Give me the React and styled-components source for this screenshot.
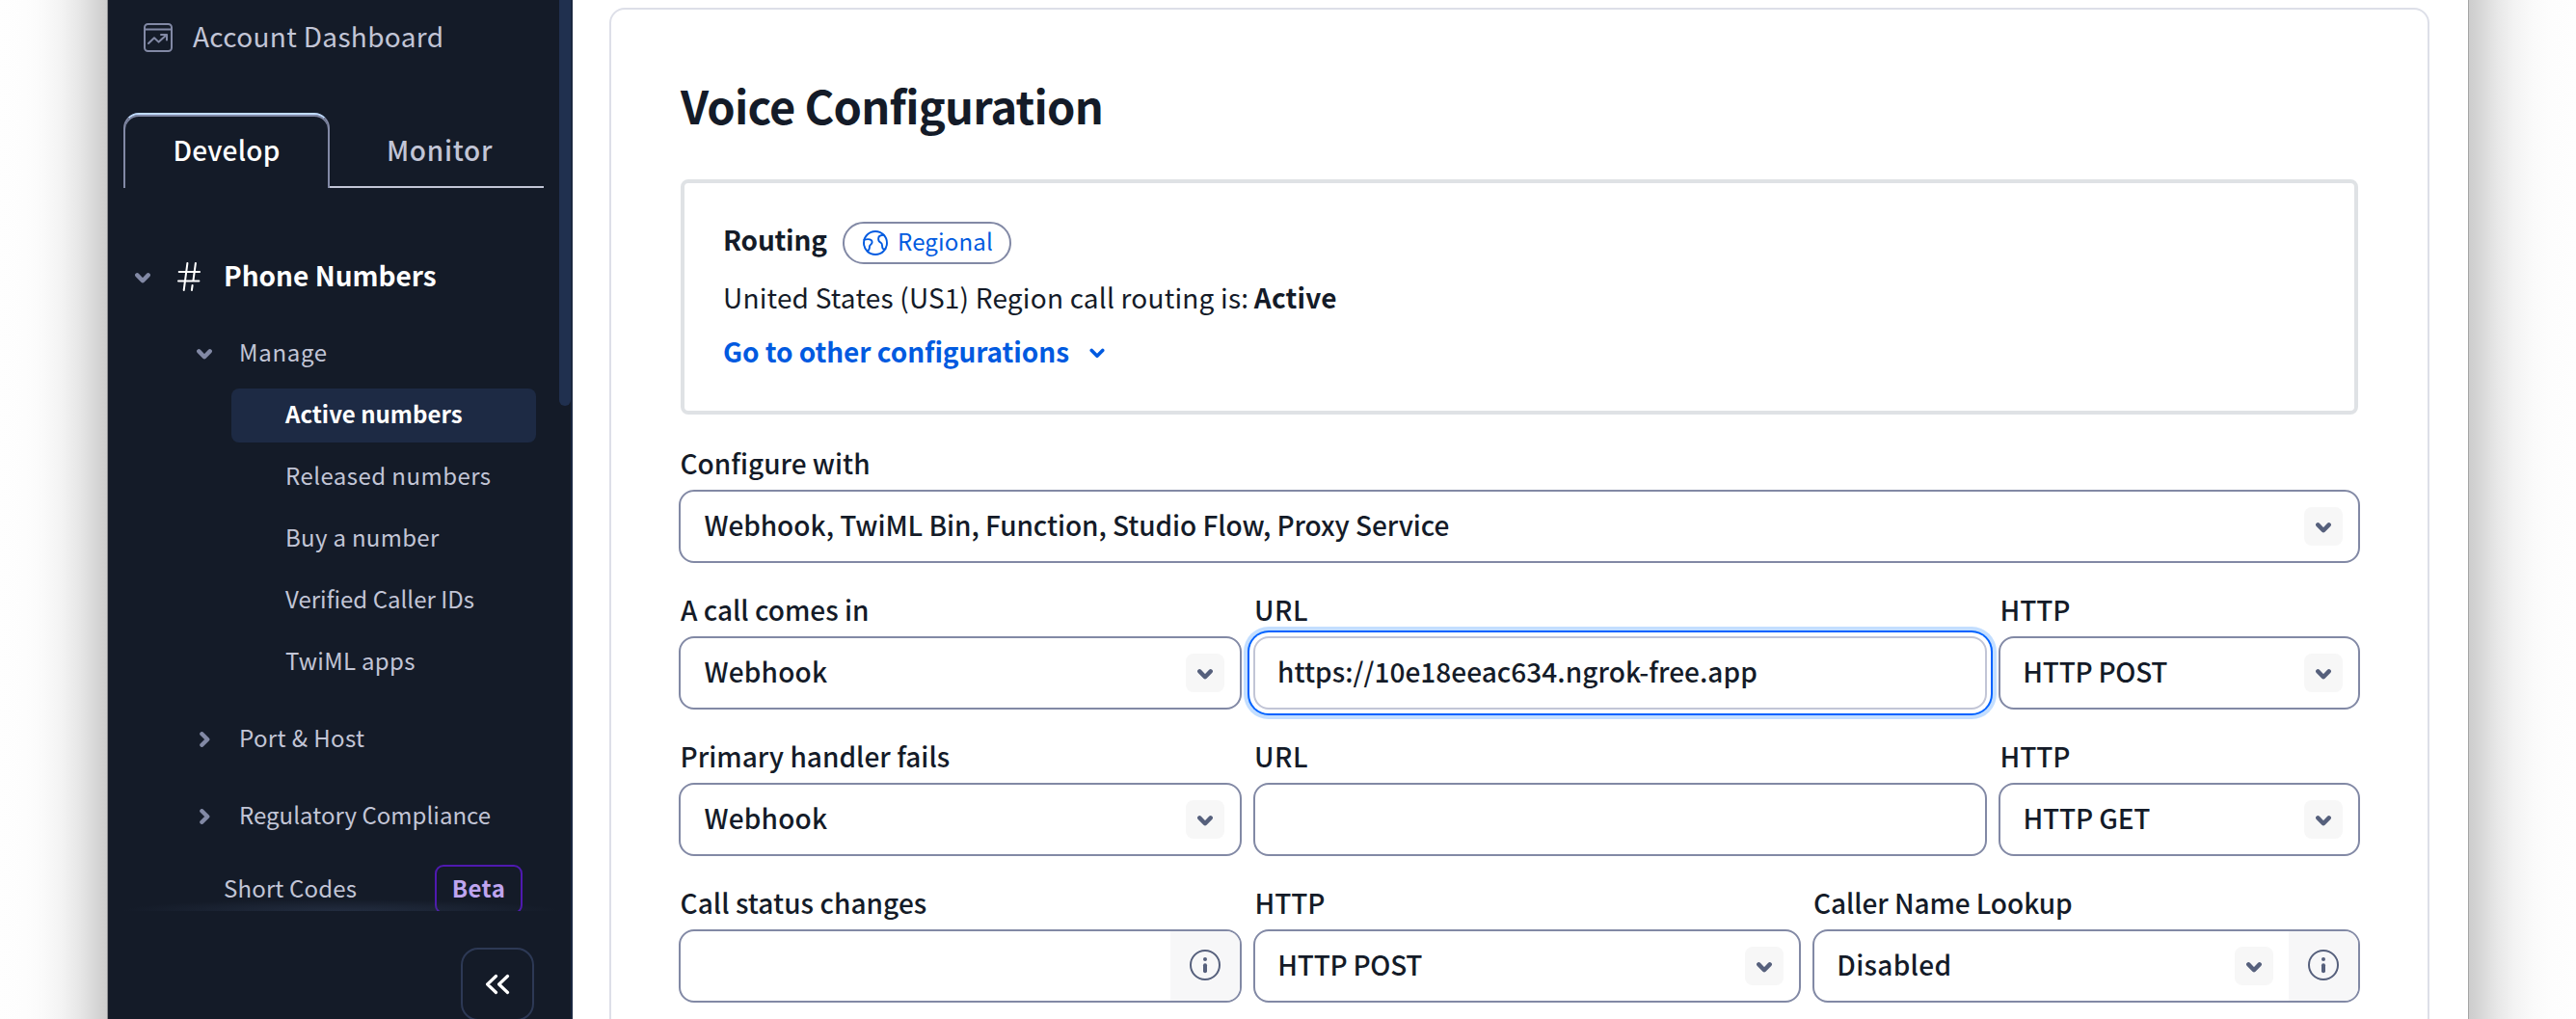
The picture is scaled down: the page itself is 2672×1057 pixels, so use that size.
import React from "react";
import styled, { createGlobalStyle } from "styled-components";

const ink = "#141b28";
const sidebarBg = "#141b28";
const navText = "#c2c5d6";
const muted = "#8289a5";
const iconInk = "#56607c";
const link = "#005ae0";

const GlobalStyle = createGlobalStyle`
  * { box-sizing: border-box; }
  body {
    margin: 0;
    background: #fff;
    color: ${ink};
    font-family: "Noto Sans CJK JP", "Noto Sans", sans-serif;
    font-size: 28px;
    line-height: 40px;
    overflow: hidden;
  }
`;

const Desktop = styled.div`
  display: flex;
  width: 2672px;
  height: 1057px;
  overflow: hidden;
`;

const WindowShadow = styled.div`
  width: 112px;
  flex: none;
  background: linear-gradient(
    to ${(p) => p.$side},
    #cdcdcd 0px,
    #d3d3d3 8px,
    #dddddd 18px,
    #e8e8e8 30px,
    #f3f3f3 47px,
    #fafafa 66px,
    #fdfdfd 84px,
    #fefefe 112px
  );
  ${(p) => (p.$side === "left" ? "border-right: 1px solid #8e8f91;" : "border-left: 1px solid #a3a3a3;")}
`;

const Window = styled.div`
  display: flex;
  width: 2448px;
  flex: none;
  background: #fff;
`;

const Sidebar = styled.aside`
  display: flex;
  flex-direction: column;
  width: 482px;
  flex: none;
  background: ${sidebarBg};
  border-right: 2px solid #1a2740;
`;

const NavScroll = styled.div`
  position: relative;
  display: flex;
  height: 945px;
  flex: none;
  overflow: hidden;
`;

const NavContent = styled.nav`
  display: flex;
  flex-direction: column;
  width: 468px;
  flex: none;
  color: ${navText};
  & > * { flex-shrink: 0; }
`;

const ScrollThumb = styled.div`
  width: 12px;
  height: 421px;
  background: #20304f;
  border-radius: 0 0 6px 6px;
`;

const BottomGlow = styled.div`
  position: absolute;
  left: 14px;
  right: 10px;
  bottom: 0;
  height: 12px;
  background: radial-gradient(ellipse 50% 100% at 50% 100%, rgba(62, 78, 108, 0.34), rgba(62, 78, 108, 0));
`;

const Text = styled.span`
  margin-left: ${(p) => p.$indent || 0}px;
  letter-spacing: ${(p) => p.$ls || 0}px;
`;

const DashboardLink = styled.a`
  display: flex;
  align-items: center;
  height: 50px;
  margin-top: 12px;
  padding-left: 37px;
  gap: 21px;
  svg { margin-top: 4px; }
`;

const Tabs = styled.div`
  display: flex;
  height: 78px;
  margin: 55px 16px 0;
`;

const Tab = styled.button`
  display: flex;
  align-items: center;
  justify-content: center;
  width: ${(p) => (p.$active ? 214 : 222)}px;
  padding: 0 0 ${(p) => (p.$active ? 4 : 0)}px ${(p) => (p.$active ? 0 : 6)}px;
  background: none;
  font: inherit;
  font-weight: 500;
  color: ${(p) => (p.$active ? "#fff" : navText)};
  border: 0 solid ${muted};
  border-bottom-color: ${navText};
  border-width: ${(p) => (p.$active ? "2px 2px 0" : "0 0 2px")};
  border-top-color: ${(p) => (p.$active ? "#c1dcff" : "transparent")};
  border-radius: ${(p) => (p.$active ? "16px 16px 0 0" : "0")};
  box-shadow: ${(p) => (p.$active ? `inset 0 2px 0 ${muted}` : "none")};
`;

const Product = styled.div`
  display: flex;
  align-items: center;
  height: 48px;
  margin-top: 65px;
  padding-left: 28px;
  color: #fff;
  font-weight: 700;
  svg:first-child { margin: 8px 28px 0 0; }
  svg + svg { margin: 6px 24px 0 0; }
  ${Text} { margin-top: 2px; }
`;

const Group = styled.div`
  display: flex;
  align-items: center;
  height: 48px;
  margin-top: ${(p) => p.$top}px;
  font-size: 24px;
  padding-left: 92px;
  ${Text} { margin-top: 2px; }
`;

const GroupIcon = styled.span`
  display: flex;
  justify-content: center;
  width: 16px;
  margin: 6px 28px 0 0;
`;

const Pages = styled.div`
  display: flex;
  flex-direction: column;
  gap: 8px;
  margin: 15px 24px 0 128px;
`;

const PageLink = styled.a`
  height: 56px;
  padding: 6px 0 0 56px;
  border-radius: 8px;
  font-size: 24px;
  white-space: nowrap;
  ${(p) => p.$active && "background: #1d2a44; color: #fff; font-weight: 700;"}
`;

const ShortCodes = styled.div`
  display: flex;
  align-items: flex-start;
  justify-content: space-between;
  margin: 29px 38px 0 120px;
  font-size: 24px;
  line-height: 48px;
`;

const BetaBadge = styled.span`
  height: 51px;
  width: 91px;
  border: 2px solid #4f19b0;
  border-radius: 9px;
  color: #bfa5ef;
  font-weight: 700;
  line-height: 44px;
  text-align: center;
`;

const SidebarFooter = styled.div`
  display: flex;
  justify-content: flex-end;
  padding: 38px 38px 0 0;
`;

const CollapseButton = styled.button`
  display: flex;
  align-items: center;
  justify-content: center;
  width: 76px;
  height: 76px;
  flex: none;
  padding: 0;
  background: none;
  border: 2px solid #2d3955;
  border-radius: 18px;
`;

const Main = styled.main`
  flex: 1;
  padding: 8px 40px 0 38px;
`;

const Card = styled.section`
  height: 1100px;
  padding: 69px 70px 0;
  border: 2px solid #dddfe8;
  border-radius: 16px;
`;

const Title = styled.h1`
  margin: 0 0 0 2px;
  font-size: 47px;
  line-height: 60px;
  font-weight: 700;
`;

const RoutingBox = styled.div`
  height: 244px;
  margin: 47px 2px 0;
  padding: 40px 40px 0;
  border: 4px solid #dfe2e5;
  border-radius: 8px;
`;

const RoutingHead = styled.div`
  display: flex;
  align-items: center;
  height: 44px;
`;

const RoutingName = styled.strong`
  width: 124px;
  padding-bottom: 8px;
  letter-spacing: -0.2px;
`;

const Pill = styled.span`
  display: flex;
  align-items: center;
  width: 175px;
  height: 44px;
  padding-left: 18px;
  gap: 9px;
  border: 2px solid ${muted};
  border-radius: 22px;
  color: ${link};
  font-size: 24px;
  ${Text} { padding-bottom: 4px; }
`;

const RoutingStatus = styled.p`
  margin: 14px 0 0;
  strong {
    margin-left: -1px;
    letter-spacing: 0.2px;
  }
`;

const RoutingLink = styled.a`
  display: flex;
  align-items: center;
  margin-top: 16px;
  gap: 21px;
  color: ${link};
  font-weight: 700;
  svg { margin-top: 5px; }
`;

const Form = styled.div`
  display: flex;
  flex-direction: column;
  gap: 28px;
  margin-top: 30px;
`;

const Row = styled.div`
  display: grid;
  grid-template-columns: ${(p) => p.$cols};
  gap: 12px;
`;

const Field = styled.div`
  display: flex;
  flex-direction: column;
  gap: 8px;
  min-width: 0;
`;

const Label = styled.label`
  padding-left: 1px;
  font-weight: 500;
  white-space: nowrap;
`;

const Control = styled.div`
  display: flex;
  align-items: center;
  height: 76px;
  border: 2px solid ${(p) => (p.$focus ? "#c2c5d6" : muted)};
  border-radius: 16px;
  overflow: hidden;
  background: #fff;
  ${(p) => p.$focus && "box-shadow: 0 0 0 4px #fff, 0 0 0 6px #0062ff, 0 0 0 10px #c3deff;"}
`;

const Value = styled.span`
  flex: 1;
  padding: 0 0 4px 23px;
  font-weight: 500;
  white-space: nowrap;
`;

const Toggle = styled.span`
  display: flex;
  align-items: center;
  justify-content: center;
  width: 40px;
  height: 40px;
  margin-right: 16px;
  border-radius: 8px;
  background: #f7f7f7;
  svg { margin-top: 2px; }
`;

const InfoAddon = styled.span`
  display: flex;
  align-items: center;
  justify-content: center;
  width: 72px;
  height: 72px;
  background: #f7f7f8;
  svg { margin-bottom: 2px; }
`;

const Chevron = ({ color = iconInk, width = 4.4 }) => (
  <svg width="16" height="11" viewBox="0 0 16 11" fill="none" stroke={color} strokeWidth={width} strokeLinecap="round" strokeLinejoin="round">
    <path d="M2.3 2.4 8 8.2l5.7-5.8" />
  </svg>
);

const ChevronRight = () => (
  <svg width="11" height="16" viewBox="0 0 11 16" fill="none" stroke={muted} strokeWidth="4.4" strokeLinecap="round" strokeLinejoin="round">
    <path d="M2.4 2.3 8.2 8l-5.8 5.7" />
  </svg>
);

const DashboardIcon = () => (
  <svg width="30" height="30" viewBox="0 0 30 30" fill="none" stroke={muted} strokeWidth="2" strokeLinecap="round" strokeLinejoin="round">
    <rect x="1" y="1" width="28" height="28" rx="3.5" />
    <path d="M1 6.5h28" />
    <path d="M5 21l6-5.8 4.6 4.4 8-7.4" />
    <path d="M18 12h6v5.6" />
  </svg>
);

const HashIcon = () => (
  <svg width="24" height="30" viewBox="0 0 24 30" fill="none" stroke="#fff" strokeWidth="2" strokeLinecap="round">
    <path d="M10.4 1 6.7 29M18.9 1 16.4 19.5M15.6 24l-.7 5M1.7 10h21.4M1 19.6h21.4" />
  </svg>
);

const GlobeIcon = () => (
  <svg width="28" height="28" viewBox="-1 -1 28 28" fill="none" stroke={link} strokeWidth="1.9" strokeLinecap="round" strokeLinejoin="round">
    <circle cx="13" cy="13" r="12" />
    <path d="M1.4 9.6C4 9 7 8.8 8.6 10c1.4 1.2 1.2 3.2 0 4.2-1.5 1.1-1.9 1.5-1.7 3.1.2 1.5-.5 3-1.9 4.5" />
    <path d="M21.6 4.8c-3.2.1-5.5 1.5-5.5 3.9 0 2.2 1.2 3.4 2.7 4.1 1.5.7 1.2 2.7 1.4 4.6.2 1.8 1.4 2.5 3.1 1.9" />
  </svg>
);

const InfoIcon = () => (
  <svg width="32" height="32" viewBox="0 0 32 32" fill="none" stroke={iconInk} strokeLinecap="round">
    <circle cx="16" cy="16" r="15" strokeWidth="2" />
    <path d="M16 16.2v6" strokeWidth="4" />
    <circle cx="16" cy="10" r="2" fill={iconInk} stroke="none" />
  </svg>
);

const CollapseIcon = () => (
  <svg width="26" height="22" viewBox="0 0 26 22" fill="none" stroke="#fff" strokeWidth="3.2" strokeLinecap="round" strokeLinejoin="round">
    <path d="M11.5 2.5 2.6 11l8.9 8.5M23.5 2.5 14.6 11l8.9 8.5" />
  </svg>
);

// Letter spacing and optical indent for each string set in the medium weight.
const tracking = {
  "URL": [0.5, 0],
  "HTTP": [-0.1, 0.5],
  "Webhook": [0.2, 1.5],
  "https://10e18eeac634.ngrok-free.app": [0.04, 0],
  "HTTP POST": [-0.25, 0.3],
  "HTTP GET": [-0.15, 0.5],
  "Configure with": [0, 0.5],
  "A call comes in": [0, 1],
  "Primary handler fails": [0.02, 0.5],
  "Webhook, TwiML Bin, Function, Studio Flow, Proxy Service": [-0.07, 1.5],
  "Disabled": [0.3, 0.3],
  "Caller Name Lookup": [-0.08, 0],
  "Call status changes": [0.06, 0.5],
};

const Tracked = ({ children }) => {
  const [ls, indent] = tracking[children] || [0, 0];
  return <Text $ls={ls} $indent={indent}>{children}</Text>;
};

const FormField = ({ label, value, select, focus, info }) => (
  <Field>
    <Label><Tracked>{label}</Tracked></Label>
    <Control $focus={focus}>
      <Value>{value && <Tracked>{value}</Tracked>}</Value>
      {select && <Toggle><Chevron /></Toggle>}
      {info && <InfoAddon><InfoIcon /></InfoAddon>}
    </Control>
  </Field>
);

const pages = [
  { name: "Active numbers", ls: 0, active: true },
  { name: "Released numbers", ls: 0.45 },
  { name: "Buy a number", ls: 0.3 },
  { name: "Verified Caller IDs", ls: 0.01 },
  { name: "TwiML apps", ls: 0.3 },
];

export default function App() {
  return (
    <>
      <GlobalStyle />
      <Desktop>
        <WindowShadow $side="left" />
        <Window>
          <Sidebar>
            <NavScroll>
              <NavContent>
                <DashboardLink>
                  <DashboardIcon />
                  <Text $ls={0.33}>Account Dashboard</Text>
                </DashboardLink>
                <Tabs>
                  <Tab $active><Text $ls={0.23}>Develop</Text></Tab>
                  <Tab><Text $ls={0.7}>Monitor</Text></Tab>
                </Tabs>
                <Product>
                  <Chevron color={muted} />
                  <HashIcon />
                  <Text>Phone Numbers</Text>
                </Product>
                <Group $top={32}>
                  <GroupIcon><Chevron color={muted} /></GroupIcon>
                  <Text $ls={0.7}>Manage</Text>
                </Group>
                <Pages>
                  {pages.map((p) => (
                    <PageLink key={p.name} $active={p.active}><Text $ls={p.ls}>{p.name}</Text></PageLink>
                  ))}
                </Pages>
                <Group $top={25}>
                  <GroupIcon><ChevronRight /></GroupIcon>
                  <Text $ls={0.38}>Port &amp; Host</Text>
                </Group>
                <Group $top={32}>
                  <GroupIcon><ChevronRight /></GroupIcon>
                  <Text $ls={0.02}>Regulatory Compliance</Text>
                </Group>
                <ShortCodes>
                  <Text $ls={0.16}>Short Codes</Text>
                  <BetaBadge><Text $ls={0.5}>Beta</Text></BetaBadge>
                </ShortCodes>
              </NavContent>
              <ScrollThumb />
              <BottomGlow />
            </NavScroll>
            <SidebarFooter>
              <CollapseButton><CollapseIcon /></CollapseButton>
            </SidebarFooter>
          </Sidebar>
          <Main>
            <Card>
              <Title><Text $ls={-0.78}>Voice Configuration</Text></Title>
              <RoutingBox>
                <RoutingHead>
                  <RoutingName>Routing</RoutingName>
                  <Pill><GlobeIcon /><Text $ls={0.15}>Regional</Text></Pill>
                </RoutingHead>
                <RoutingStatus><Text $ls={0.2}>United States (US1) Region call routing is: </Text><strong>Active</strong></RoutingStatus>
                <RoutingLink>
                  <Text $ls={-0.05}>Go to other configurations</Text>
                  <Chevron color={link} width={3.6} />
                </RoutingLink>
              </RoutingBox>
              <Form>
                <Row $cols="1744px">
                  <FormField select label="Configure with" value="Webhook, TwiML Bin, Function, Studio Flow, Proxy Service" />
                </Row>
                <Row $cols="584px 761px 375px">
                  <FormField select label="A call comes in" value="Webhook" />
                  <FormField focus label="URL" value="https://10e18eeac634.ngrok-free.app" />
                  <FormField select label="HTTP" value="HTTP POST" />
                </Row>
                <Row $cols="584px 761px 375px">
                  <FormField select label="Primary handler fails" value="Webhook" />
                  <FormField label="URL" />
                  <FormField select label="HTTP" value="HTTP GET" />
                </Row>
                <Row $cols="584px 568px 568px">
                  <FormField info label="Call status changes" />
                  <FormField select label="HTTP" value="HTTP POST" />
                  <FormField select info label="Caller Name Lookup" value="Disabled" />
                </Row>
              </Form>
            </Card>
          </Main>
        </Window>
        <WindowShadow $side="right" />
      </Desktop>
    </>
  );
}
